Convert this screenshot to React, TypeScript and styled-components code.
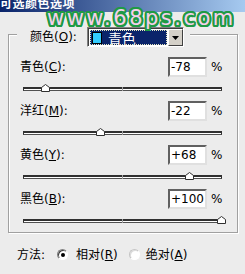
import React from 'react';
import styled, { createGlobalStyle } from 'styled-components';

const Global = createGlobalStyle`
  html, body { margin: 0; padding: 0; background: #ececec; }
  body {
    width: 245px; height: 274px; overflow: hidden; position: relative;
    font-family: "DejaVu Sans", "Noto Sans CJK SC", sans-serif;
    font-size: 12px; line-height: 14px; color: #000;
  }
`;

const TitleBar = styled.div`
  height: 12px;
  overflow: hidden;
  background: linear-gradient(to right, #0a246a, #a6caf0);
  color: #fff;
  font-weight: bold;
  font-size: 12px;
  line-height: 12px;
`;

const TitleText = styled.div`
  margin-top: -3px;
  letter-spacing: 0.5px;
  font-family: "Noto Sans CJK SC", sans-serif;
`;

const Watermark = styled.div`
  position: absolute;
  top: 8px;
  left: 47px;
  font-family: "DejaVu Sans", sans-serif;
  font-size: 21px;
  line-height: 21px;
  letter-spacing: 2.5px;
  color: #f6d0ec;
  white-space: nowrap;
  text-shadow:
    2px 0 0 #1f9a45, -2px 0 0 #1f9a45, 0 2px 0 #1f9a45, 0 -2px 0 #1f9a45,
    1.5px 1.5px 0 #1f9a45, -1.5px 1.5px 0 #1f9a45, 1.5px -1.5px 0 #1f9a45, -1.5px -1.5px 0 #1f9a45,
    1px 2px 0 #1f9a45, -1px 2px 0 #1f9a45, 1px -2px 0 #1f9a45, -1px -2px 0 #1f9a45,
    2px 1px 0 #1f9a45, -2px 1px 0 #1f9a45, 2px -1px 0 #1f9a45, -2px -1px 0 #1f9a45;
`;

const Page = styled.div`
  padding: 0 8px;
`;

const GroupBox = styled.div`
  box-sizing: border-box;
  width: 230px;
  margin-top: 22px;
  border: 1px solid #a0a0a0;
  box-shadow: inset 1px 1px 0 #fff, 1px 1px 0 #fff;
  padding-bottom: 9px;
`;

const Header = styled.div`
  display: flex;
  align-items: center;
  width: fit-content;
  height: 20px;
  margin: -8px 0 0 8px;
  padding: 0 6px 0 13px;
  gap: 10px;
  background: #ececec;
`;

const Label = styled.span`
  white-space: nowrap;
`;

const DropField = styled.div`
  box-sizing: border-box;
  width: 97px;
  height: 20px;
  display: flex;
  border: 1px solid;
  border-color: #808080 #fff #fff #808080;
  box-shadow: inset 1px 1px 0 #404040;
  background: #fff;
  padding: 1px 0 0 1px;
`;

const Selection = styled.div`
  flex: 1;
  display: flex;
  align-items: center;
  gap: 6px;
  margin: 1px;
  padding-left: 2px;
  background: #0a246a;
  outline: 1px dotted #e8e8c0;
  outline-offset: -1px;
  color: #fff;
  font-family: "Noto Sans CJK SC", sans-serif;
  font-size: 14px;
  line-height: 14px;
`;

const Swatch = styled.span<{ $color: string }>`
  width: 10px;
  height: 12px;
  background: ${p => p.$color};
  border: 1px solid #000;
  box-sizing: border-box;
`;

const DropButton = styled.div`
  box-sizing: border-box;
  width: 15px;
  display: flex;
  align-items: center;
  justify-content: center;
  background: #d4d0c8;
  border: 1px solid;
  border-color: #fff #404040 #404040 #fff;
`;

const Row = styled.div`
  display: flex;
  align-items: center;
  height: 20px;
  margin-top: 10px;
  padding-left: 11px;
`;

const RowLabel = styled.span`
  width: 148px;
  white-space: nowrap;
`;

const NumBox = styled.div`
  box-sizing: border-box;
  width: 39px;
  height: 20px;
  display: flex;
  align-items: center;
  padding-left: 1px;
  background: #fff;
  border: 2px solid;
  border-color: #606060 #e0e0e0 #e0e0e0 #606060;
`;

const Percent = styled.span`
  margin-left: 4px;
`;

const SliderWrap = styled.div`
  position: relative;
  width: 199px;
  height: 7px;
  margin: 7px 0 0 14px;
  padding-top: 3px;
  box-sizing: border-box;
`;

const Track = styled.div`
  position: relative;
  box-sizing: border-box;
  height: 4px;
  background: #fff;
  border: 1px solid #303030;
  border-top-width: 2px;
  border-bottom-color: #505050;
`;

const CenterTick = styled.div`
  position: absolute;
  left: 98px;
  top: -2px;
  width: 1px;
  height: 4px;
  background: #a0a0a0;
`;

const Thumb = styled.svg`
  position: absolute;
  top: 0;
`;

const MethodRow = styled.div`
  display: flex;
  align-items: center;
  height: 13px;
  margin-top: 15px;
  padding-left: 17px;
`;

const Radio = styled.span<{ $checked?: boolean; $gapLeft: number; $gapRight: number }>`
  box-sizing: border-box;
  width: 11px;
  height: 11px;
  border-radius: 50%;
  margin: 0 ${p => p.$gapRight}px 0 ${p => p.$gapLeft}px;
  border: 1px solid;
  border-color: ${p => (p.$checked ? '#808080 #fff #fff #808080' : '#c4c4c4 #fff #fff #c4c4c4')};
  background: #fff;
  display: flex;
  align-items: center;
  justify-content: center;
  box-shadow: ${p => (p.$checked ? 'inset 1px 1px 0 #404040' : 'inset 1px 1px 0 #dcdcdc')};
`;

const Dot = styled.span`
  width: 4px;
  height: 4px;
  border-radius: 50%;
  background: #000;
`;

type Channel = { name: string; key: string; value: number };

const channels: Channel[] = [
  { name: '青色', key: 'C', value: -78 },
  { name: '洋红', key: 'M', value: -22 },
  { name: '黄色', key: 'Y', value: 68 },
  { name: '黑色', key: 'B', value: 100 },
];

const fmt = (v: number) => (v > 0 ? `+${v}` : `${v}`);

function Slider({ value }: { value: number }) {
  const x = 99 + (value / 100) * 99;
  return (
    <SliderWrap>
      <Track>
        <CenterTick />
      </Track>
      <Thumb width="9" height="8" viewBox="0 0 9 8" style={{ left: x - 4 }}>
        <polygon points="0.5,7.5 0.5,3.5 4.5,0.5 8.5,3.5 8.5,7.5" fill="#fff" stroke="#303030" strokeWidth="1" />
      </Thumb>
    </SliderWrap>
  );
}

export default function App() {
  return (
    <>
      <Global />
      <TitleBar>
        <TitleText>可选颜色选项</TitleText>
      </TitleBar>
      <Page>
        <GroupBox>
          <Header>
            <Label>
              颜色(<u>O</u>):
            </Label>
            <DropField>
              <Selection>
                <Swatch $color="#33ccff" />
                <span>青色</span>
              </Selection>
              <DropButton>
                <svg width="7" height="4" viewBox="0 0 7 4">
                  <polygon points="0,0 7,0 3.5,4" fill="#000" />
                </svg>
              </DropButton>
            </DropField>
          </Header>
          {channels.map(c => (
            <React.Fragment key={c.key}>
              <Row>
                <RowLabel>
                  {c.name}(<u>{c.key}</u>):
                </RowLabel>
                <NumBox>{fmt(c.value)}</NumBox>
                <Percent>%</Percent>
              </Row>
              <Slider value={c.value} />
            </React.Fragment>
          ))}
        </GroupBox>
      </Page>
      <MethodRow>
        <Label>方法:</Label>
        <Radio $checked $gapLeft={12} $gapRight={8}>
          <Dot />
        </Radio>
        <Label>
          相对(<u>R</u>)
        </Label>
        <Radio $gapLeft={11} $gapRight={6} />
        <Label>
          绝对(<u>A</u>)
        </Label>
      </MethodRow>
      <Watermark>www.68ps.com</Watermark>
    </>
  );
}
